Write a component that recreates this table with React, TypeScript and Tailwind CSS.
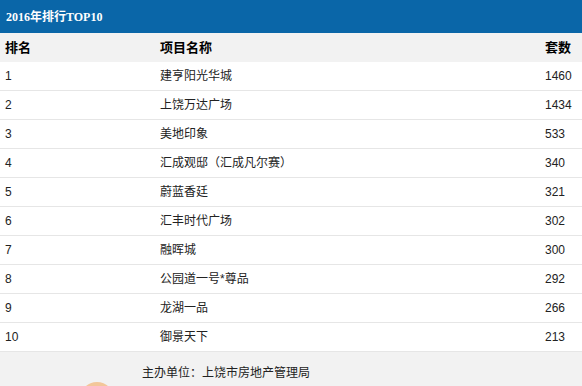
const rows: [number, string, number][] = [
  [1, "建亨阳光华城", 1460],
  [2, "上饶万达广场", 1434],
  [3, "美地印象", 533],
  [4, "汇成观邸（汇成凡尔赛）", 340],
  [5, "蔚蓝香廷", 321],
  [6, "汇丰时代广场", 302],
  [7, "融晖城", 300],
  [8, "公园道一号*尊品", 292],
  [9, "龙湖一品", 266],
  [10, "御景天下", 213],
];

export default function App() {
  return (
    <div
      className="w-[582px] h-[386px] overflow-hidden bg-white text-[12px] text-[#222]"
      style={{ fontFamily: '"Liberation Sans", "Noto Sans CJK SC", sans-serif' }}
    >
      <div className="h-[33px] bg-[#0a66a8] flex items-center px-[6px]">
        <span
          className="text-white font-bold text-[12px]"
          style={{ fontFamily: '"Liberation Serif", "Noto Sans CJK SC", serif' }}
        >
          2016年排行TOP10
        </span>
      </div>

      <div className="h-[29px] bg-[#f2f2f2] flex items-center font-bold text-[13px] text-black">
        <div className="w-[160px] pl-[5px]">排名</div>
        <div className="w-[385px]">项目名称</div>
        <div className="flex-1">套数</div>
      </div>

      {rows.map(([rank, name, count]) => (
        <div key={rank} className="h-[29px] border-b border-[#e6e6e6] flex items-center">
          <div className="w-[160px] pl-[5px]">{rank}</div>
          <div className="w-[385px]">{name}</div>
          <div className="flex-1">{count}</div>
        </div>
      ))}

      <div className="h-[34px] bg-[#f2f2f2] relative overflow-hidden">
        <div className="pl-[142px] pt-[12px] text-[12px] text-[#222]">主办单位：上饶市房地产管理局</div>
        <div className="absolute left-[80px] top-[30px] w-[34px] h-[34px] rounded-full bg-[#f3c79a]" />
      </div>
    </div>
  );
}
